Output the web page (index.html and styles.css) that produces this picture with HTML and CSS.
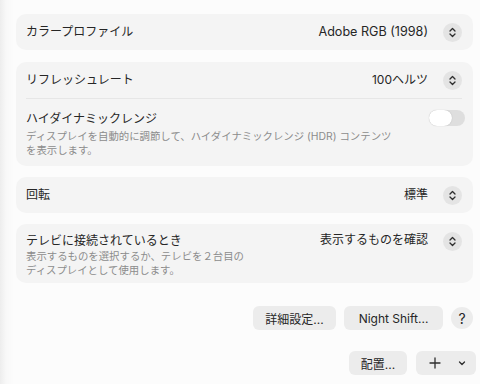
FILE: index.html
```html
<!DOCTYPE html>
<html lang="ja">
<head>
  <meta charset="UTF-8" />
  <title>ディスプレイ</title>
  <link rel="stylesheet" href="styles.css">
</head>
<body>
  <div class="pane">
    <div class="card">
      <div class="row">
        <span class="title">カラープロファイル</span>
        <span class="value latin">Adobe RGB (1998)</span>
        <span class="stepper"><svg viewBox="0 0 19 19" width="19" height="19"><path d="M7 8 L9.5 5.5 L12 8 M7 11 L9.5 13.5 L12 11" /></svg></span>
      </div>
    </div>

    <div class="card">
      <div class="row">
        <span class="title">リフレッシュレート</span>
        <span class="value">100ヘルツ</span>
        <span class="stepper"><svg viewBox="0 0 19 19" width="19" height="19"><path d="M7 8 L9.5 5.5 L12 8 M7 11 L9.5 13.5 L12 11" /></svg></span>
      </div>
      <div class="divider"></div>
      <div class="row tall">
        <div class="text">
          <div class="title">ハイダイナミックレンジ</div>
          <div class="sub">ディスプレイを自動的に調節して、ハイダイナミックレンジ (HDR) コンテンツ<br>を表示します。</div>
        </div>
        <span class="toggle"><span class="knob"></span></span>
      </div>
    </div>

    <div class="card">
      <div class="row">
        <span class="title">回転</span>
        <span class="value">標準</span>
        <span class="stepper"><svg viewBox="0 0 19 19" width="19" height="19"><path d="M7 8 L9.5 5.5 L12 8 M7 11 L9.5 13.5 L12 11" /></svg></span>
      </div>
    </div>

    <div class="card">
      <div class="row tall tv">
        <div class="text">
          <div class="title">テレビに接続されているとき</div>
          <div class="sub">表示するものを選択するか、テレビを２台目の<br>ディスプレイとして使用します。</div>
        </div>
        <span class="value">表示するものを確認</span>
        <span class="stepper"><svg viewBox="0 0 19 19" width="19" height="19"><path d="M7 8 L9.5 5.5 L12 8 M7 11 L9.5 13.5 L12 11" /></svg></span>
      </div>
    </div>

    <div class="actions">
      <button class="btn wide1">詳細設定...</button>
      <button class="btn wide2">Night Shift...</button>
      <button class="help">?</button>
    </div>

    <div class="actions bottom">
      <button class="btn wide3">配置...</button>
      <button class="btn add">
        <svg viewBox="0 0 12 12" width="12" height="12"><path d="M6 1 V11 M1 6 H11" /></svg>
        <svg viewBox="0 0 10 10" width="10" height="10"><path d="M2.5 4 L5 6.5 L7.5 4" /></svg>
      </button>
    </div>
  </div>
</body>
</html>
```

FILE: styles.css
```css
body {
  margin: 0;
  width: 480px;
  height: 384px;
  overflow: hidden;
  font-family: Inter, "Noto Sans CJK JP", sans-serif;
  color: #262626;
  background: linear-gradient(to right, #ededed 0px, #f8f8f8 6px, #fcfcfc 14px);
}
.pane {
  padding: 14px 7px 0 16px;
}
.card {
  background: #f4f4f4;
  border-radius: 10px;
  padding: 0 11px 0 10px;
  margin-bottom: 11px;
}
.card:first-child {
  margin-bottom: 12px;
}
.row {
  display: flex;
  align-items: center;
  height: 36px;
  font-size: 12px;
}
.row.tall {
  height: auto;
  align-items: flex-start;
  padding: 12px 0 8px;
}
.row.tv {
  padding: 9px 0 5px;
}
.title {
  flex: 1;
  line-height: 16px;
}
.text {
  flex: 1;
}
.sub {
  font-size: 10.4px;
  line-height: 14px;
  color: #8c8c8c;
  margin-top: 3px;
}
.tv .sub {
  margin-top: 1px;
}
.value {
  margin-right: 15px;
  line-height: 16px;
}
.latin {
  font-size: 12.6px;
}
.tv .value,
.tv .stepper {
  margin-top: -1px;
}
.stepper {
  width: 19px;
  height: 19px;
  border-radius: 50%;
  background: #e4e4e4;
  display: flex;
}
.stepper path {
  fill: none;
  stroke: #2e2e2e;
  stroke-width: 1.3;
  stroke-linecap: round;
  stroke-linejoin: round;
}
.divider {
  height: 1px;
  background: #e6e6e6;
}
.toggle {
  width: 36px;
  height: 16px;
  border-radius: 8px;
  background: #dedede;
  margin: -1px -3px 0 0;
  display: flex;
}
.knob {
  width: 23px;
  height: 16px;
  border-radius: 8px;
  background: #fff;
  box-shadow: 0 0 1px rgba(0, 0, 0, 0.25);
}
.actions {
  display: flex;
  justify-content: flex-end;
  align-items: center;
  gap: 8px;
  margin-top: 23px;
}
.actions.bottom {
  margin-top: 21px;
  gap: 9px;
  margin-right: -3px;
}
.btn {
  height: 24px;
  border: none;
  border-radius: 6px;
  background: #ececec;
  font-family: Inter, "Noto Sans CJK JP", sans-serif;
  font-size: 12px;
  color: #262626;
  padding: 0;
}
.wide1 { width: 83px; }
.wide2 { width: 99px; }
.wide3 { width: 58px; }
.add {
  width: 60px;
  display: flex;
  align-items: center;
  justify-content: space-between;
  padding: 0 9px 0 13px;
}
.add path {
  fill: none;
  stroke: #2e2e2e;
  stroke-width: 1.3;
  stroke-linecap: round;
  stroke-linejoin: round;
}
.help {
  width: 22px;
  height: 22px;
  border: none;
  border-radius: 50%;
  background: #ececec;
  font-family: Inter, sans-serif;
  font-size: 14px;
  color: #262626;
  padding: 0;
}
```
